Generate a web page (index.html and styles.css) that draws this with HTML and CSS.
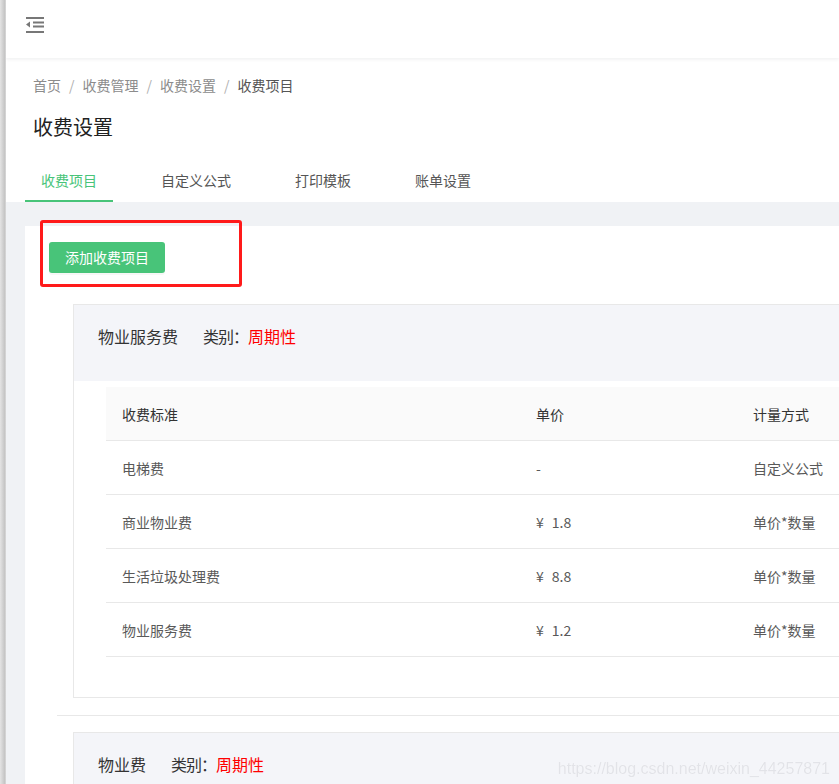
FILE: index.html
```html
<!DOCTYPE html>
<html>
<head>
    <meta charset="utf-8">
    <title>收费设置</title>
    <link rel="stylesheet" href="styles.css">
</head>
<body>
<div class="layout">
    <div class="side-shadow"></div>
    <div class="main">
        <div class="topbar">
            <svg class="fold-icon" width="18" height="16" viewBox="0 0 18 16">
                <rect x="0" y="0" width="18" height="2" fill="#777"/>
                <rect x="7" y="4.5" width="11" height="2" fill="#777"/>
                <rect x="7" y="8.5" width="11" height="2" fill="#777"/>
                <rect x="0" y="14" width="18" height="2" fill="#777"/>
                <polygon points="4,4.5 0,7.5 4,10.5" fill="#777"/>
            </svg>
        </div>

        <div class="page-head">
            <div class="crumbs"><a href="#">首页</a><span class="sep">/</span><a href="#">收费管理</a><span class="sep">/</span><a href="#">收费设置</a><span class="sep">/</span><span class="current">收费项目</span></div>
            <h1 class="page-title">收费设置</h1>
            <div class="tabs">
                <div class="tab active">收费项目</div>
                <div class="tab">自定义公式</div>
                <div class="tab">打印模板</div>
                <div class="tab">账单设置</div>
            </div>
        </div>

        <div class="content">
            <div class="panel">
                <div class="mark-box"></div>
                <button class="btn-add">添加收费项目</button>

                <div class="fee-list">
                    <div class="fee-group">
                        <div class="fee-card">
                            <div class="fee-head"><span class="fee-name">物业服务费</span><span class="fee-label">类别：</span><span class="fee-type">周期性</span></div>
                            <div class="fee-body">
                                <table class="fee-table">
                                    <thead>
                                        <tr>
                                            <th class="col-name">收费标准</th>
                                            <th class="col-price">单价</th>
                                            <th>计量方式</th>
                                        </tr>
                                    </thead>
                                    <tbody>
                                        <tr><td>电梯费</td><td>-</td><td>自定义公式</td></tr>
                                        <tr><td>商业物业费</td><td><span class="yen">¥</span>1.8</td><td>单价*数量</td></tr>
                                        <tr><td>生活垃圾处理费</td><td><span class="yen">¥</span>8.8</td><td>单价*数量</td></tr>
                                        <tr><td>物业服务费</td><td><span class="yen">¥</span>1.2</td><td>单价*数量</td></tr>
                                    </tbody>
                                </table>
                            </div>
                        </div>
                    </div>

                    <div class="fee-group">
                        <div class="fee-card">
                            <div class="fee-head"><span class="fee-name">物业费</span><span class="fee-label">类别：</span><span class="fee-type">周期性</span></div>
                        </div>
                    </div>
                </div>
            </div>
        </div>
    </div>
    <div class="watermark">https://blog.csdn.net/weixin_44257871</div>
</div>
</body>
</html>
```

FILE: styles.css
```css
html, body {
    margin: 0;
    padding: 0;
    height: 100%;
    overflow: hidden;
}

body {
    font-family: "Noto Sans CJK SC", "Noto Sans", sans-serif;
    font-size: 14px;
    color: #333;
    background: #f0f2f5;
}

.layout {
    display: flex;
    min-height: 100%;
}

.side-shadow {
    flex: none;
    width: 6px;
    background: linear-gradient(to right, #e4e4e4, #c6c6c6 75%, #dadada);
}

.main {
    flex: 1;
    min-width: 0;
    overflow: hidden;
    background: #f0f2f5;
}

/* top bar */
.topbar {
    height: 58px;
    background: #fff;
    padding-left: 20px;
    box-shadow: 0 1px 4px rgba(0, 21, 41, .08);
    position: relative;
    z-index: 1;
}

.fold-icon {
    display: block;
    padding-top: 17px;
}

/* page header */
.page-head {
    background: #fff;
    padding: 17px 0 0 27px;
}

.crumbs {
    line-height: 20px;
    font-size: 14px;
}

.crumbs a {
    color: #8c8c8c;
    text-decoration: none;
}

.crumbs .sep {
    color: #b0b0b0;
    margin: 0 8px;
}

.crumbs .current {
    color: #555;
}

.page-title {
    margin: 18px 0 0;
    font-size: 20px;
    font-weight: normal;
    line-height: 28px;
    color: #222;
}

.tabs {
    display: flex;
    margin: 20px 0 0 -8px;
}

.tab {
    padding: 0 16px 1px;
    margin-right: 32px;
    line-height: 38px;
    height: 38px;
    border-bottom: 2px solid transparent;
    color: #555;
}

.tab.active {
    color: #48c479;
    border-bottom-color: #48c479;
}

/* content */
.content {
    padding: 24px 0 0 19px;
}

.panel {
    position: relative;
    width: 1200px;
    min-height: 700px;
    background: #fff;
    padding: 16px 0 0 24px;
}

.mark-box {
    position: absolute;
    left: 15px;
    top: -6px;
    width: 196px;
    height: 61px;
    border: 3px solid #ff1a1a;
    border-radius: 3px;
}

.btn-add {
    display: block;
    height: 31px;
    padding: 0 16px;
    border: none;
    border-radius: 3px;
    background: #48c479;
    color: #fff;
    font-family: inherit;
    font-size: 14px;
    line-height: 31px;
    box-shadow: 0 2px 0 rgba(0, 0, 0, .03);
}

.fee-list {
    margin: 31px 0 0 8px;
}

.fee-group {
    padding: 0 0 17px 16px;
    margin-bottom: 16px;
    border-bottom: 1px solid #e8e8e8;
}

.fee-card {
    width: 1050px;
    border: 1px solid #e8e8e8;
}

.fee-head {
    background: #f4f5f9;
    padding: 20px 24px 34px;
    line-height: 22px;
    font-size: 16px;
    color: #333;
}

.fee-name {
    margin-right: 25px;
}

.fee-label {
    letter-spacing: -1px;
}

.fee-type {
    color: #ff0000;
}

.fee-body {
    padding: 6px 0 40px 32px;
}

.fee-table {
    width: 960px;
    border-collapse: collapse;
    font-size: 14px;
}

.fee-table th,
.fee-table td {
    height: 53px;
    padding: 0 16px;
    text-align: left;
    border-bottom: 1px solid #e8e8e8;
}

.fee-table th {
    background: #fafafa;
    font-weight: normal;
    color: #333;
}

.fee-table td {
    color: #595959;
}

.yen {
    margin-right: 8px;
}

.col-name {
    width: 382px;
}

.col-price {
    width: 185px;
}

.watermark {
    position: fixed;
    right: 9px;
    bottom: 6px;
    font-family: "Liberation Sans", Arial, sans-serif;
    font-size: 16px;
    color: #e2e3e8;
    text-shadow: 0 0 1px #fff;
}
```
